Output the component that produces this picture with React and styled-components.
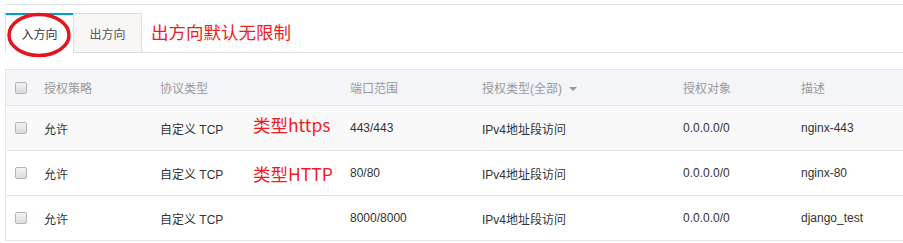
import React from "react";
import { styled, createGlobalStyle } from "styled-components";

const GlobalStyle = createGlobalStyle`
  body {
    margin: 0;
    background: #fff;
    font-family: "Liberation Sans", "Noto Sans CJK SC", sans-serif;
    font-size: 12px;
    color: #333;
  }
`;

const Page = styled.div`
  width: 903px;
  height: 243px;
  padding: 4px 0 0 5px;
  box-sizing: border-box;
  overflow: hidden;
`;

const TopRule = styled.div`
  border-top: 1px solid #e1e1e1;
  margin-bottom: 8px;
`;

const TabBar = styled.div`
  position: relative;
  display: flex;
  align-items: stretch;
  height: 39px;
  border-bottom: 1px solid #ddd;
`;

const Tab = styled.div`
  width: ${(p) => (p.$active ? "68px" : "69px")};
  display: flex;
  align-items: center;
  justify-content: center;
  box-sizing: border-box;
  margin-bottom: -1px;
  font-family: "Noto Sans CJK SC", sans-serif;
  font-size: 12px;
  color: ${(p) => (p.$active ? "#333" : "#555")};
  background: ${(p) => (p.$active ? "#fff" : "#f8f7f5")};
  border-top: ${(p) => (p.$active ? "2px solid #00a0c8" : "1px solid #ddd")};
  border-left: 1px solid #ddd;
  border-right: ${(p) => (p.$active ? "none" : "1px solid #ddd")};
  border-bottom: ${(p) => (p.$active ? "1px solid #fff" : "1px solid #ddd")};
`;

const Note = styled.span`
  font-family: "Noto Sans CJK SC", sans-serif;
  font-size: 17.5px;
  color: #ee1c25;
  position: relative;
  top: ${(p) => p.$lift || 0}px;
`;

const TabNote = styled(Note)`
  align-self: center;
  margin-left: 9px;
  margin-top: -2px;
`;

const Circle = styled.svg`
  position: absolute;
  left: 2px;
  top: -5px;
  pointer-events: none;
`;

const Table = styled.div`
  margin-top: 16px;
  width: 910px;
  border-top: 1px solid #e3e6eb;
  border-left: 1px solid #e3e6eb;
`;

const Row = styled.div`
  display: grid;
  grid-template-columns: 28px 116px 190px 132px 201px 118px 1fr;
  align-items: center;
  height: ${(p) => (p.$head ? "35px" : "44px")};
  border-bottom: 1px solid #e3e6eb;
  background: ${(p) => (p.$head ? "#f4f5f9" : p.$hover ? "#f9f9f9" : "#fff")};
  color: ${(p) => (p.$head ? "#999" : "#333")};
`;

const Cell = styled.div`
  padding-left: 10px;
  white-space: nowrap;
  display: flex;
  align-items: center;
`;

const CheckCell = styled.div`
  padding-left: 9px;
  display: flex;
  align-items: center;
`;

const Check = styled.span`
  width: 12px;
  height: 12px;
  box-sizing: border-box;
  border: 1px solid #b4b4b4;
  border-radius: 2px;
  background: linear-gradient(#f2f2f2, #dcdcdc);
`;

const ProtoText = styled.span`
  display: inline-block;
  min-width: 93px;
`;

const Caret = styled.span`
  display: inline-block;
  margin-left: 7px;
  margin-top: 2px;
  border-left: 4px solid transparent;
  border-right: 4px solid transparent;
  border-top: 4px solid #999;
`;

const rules = [
  { port: "443/443", desc: "nginx-443", note: "类型https", lift: -4, hover: true },
  { port: "80/80", desc: "nginx-80", note: "类型HTTP", lift: 0 },
  { port: "8000/8000", desc: "django_test" },
];

const App = () => {
  return (
    <Page>
      <GlobalStyle />
      <TopRule />
      <TabBar>
        <Tab $active>入方向</Tab>
        <Tab>出方向</Tab>
        <TabNote>出方向默认无限制</TabNote>
        <Circle width="70" height="50" viewBox="0 0 70 50">
          <ellipse cx="32" cy="27" rx="30" ry="20.5" fill="none" stroke="#e3161e" strokeWidth="3.5" />
        </Circle>
      </TabBar>
      <Table>
        <Row $head>
          <CheckCell>
            <Check />
          </CheckCell>
          <Cell>授权策略</Cell>
          <Cell>协议类型</Cell>
          <Cell>端口范围</Cell>
          <Cell>
            授权类型(全部)
            <Caret />
          </Cell>
          <Cell>授权对象</Cell>
          <Cell>描述</Cell>
        </Row>
        {rules.map((r) => (
          <Row key={r.desc} $hover={r.hover}>
            <CheckCell>
              <Check />
            </CheckCell>
            <Cell>允许</Cell>
            <Cell>
              <ProtoText>自定义 TCP</ProtoText>
              {r.note && <Note $lift={r.lift}>{r.note}</Note>}
            </Cell>
            <Cell>{r.port}</Cell>
            <Cell>IPv4地址段访问</Cell>
            <Cell>0.0.0.0/0</Cell>
            <Cell>{r.desc}</Cell>
          </Row>
        ))}
      </Table>
    </Page>
  );
};

export default App;
